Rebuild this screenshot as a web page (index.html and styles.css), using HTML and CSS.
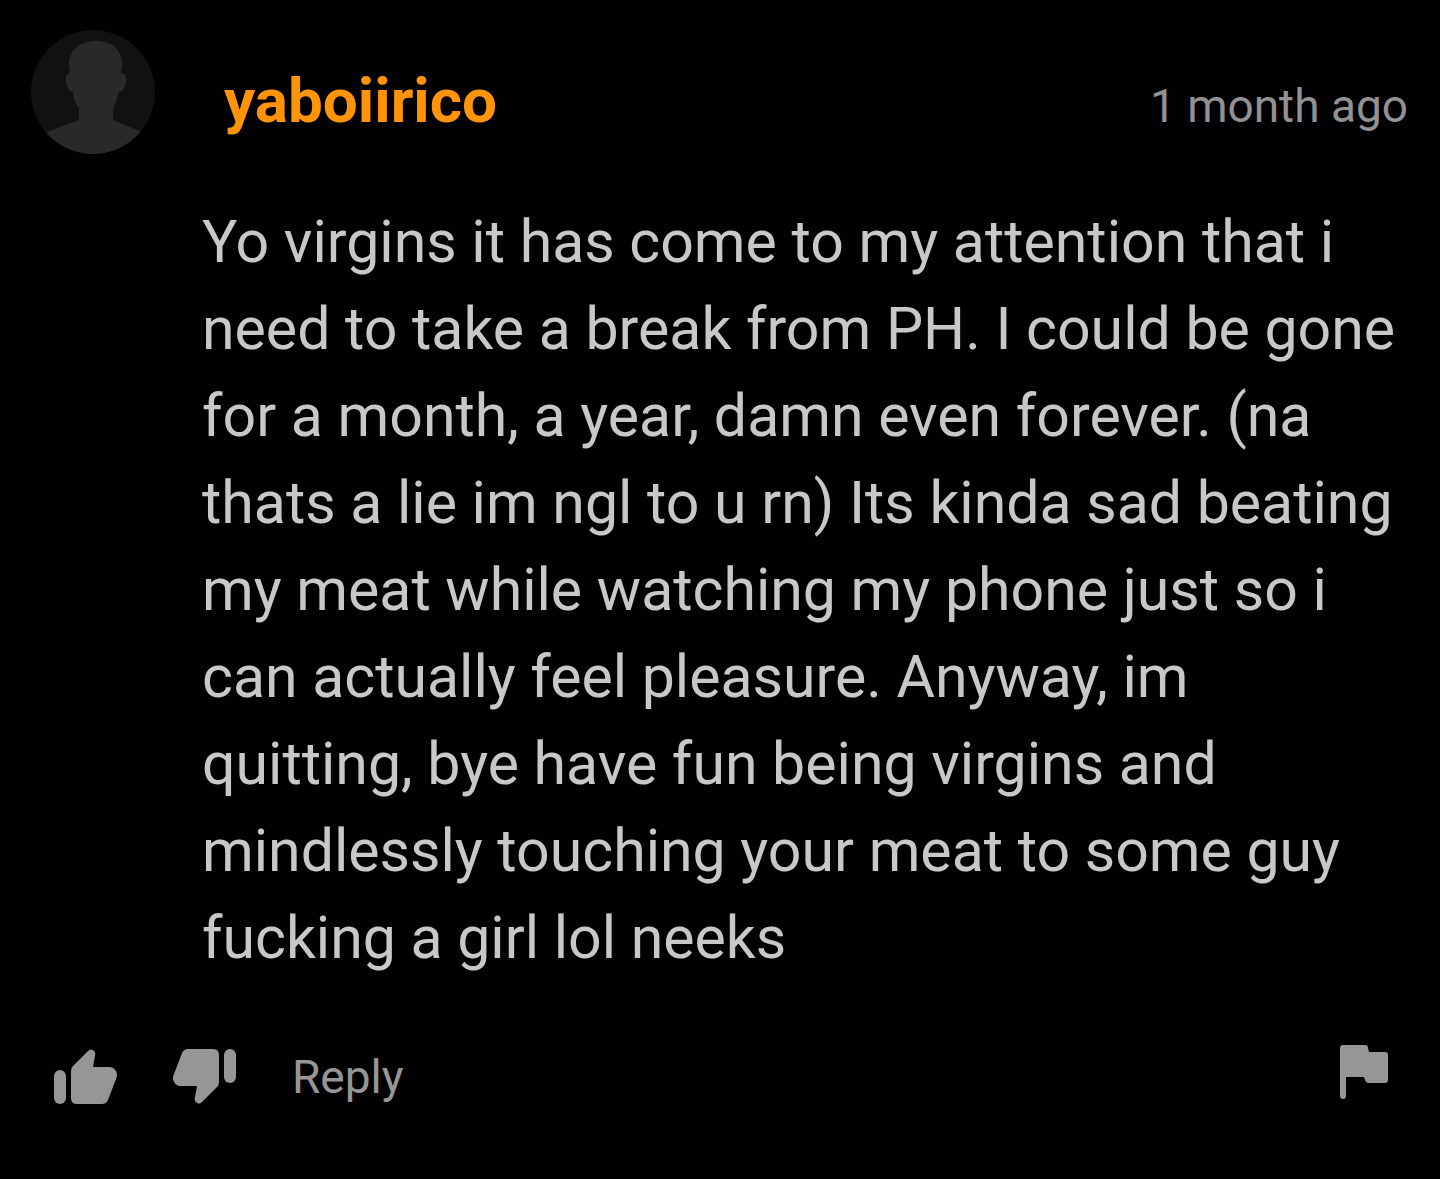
FILE: index.html
```html
<!DOCTYPE html>
<html lang="en">
<head>
<meta charset="utf-8">
<meta name="viewport" content="width=device-width, initial-scale=1">
<title>Comment</title>
<link rel="stylesheet" href="styles.css">
</head>
<body>
<article class="comment">
  <header class="comment-header">
    <svg class="avatar" viewBox="0 0 124 124" aria-hidden="true">
      <defs><clipPath id="avatar-clip"><circle cx="62" cy="62" r="62"/></clipPath></defs>
      <g clip-path="url(#avatar-clip)">
        <rect class="avatar-bg" width="124" height="124"/>
        <path class="avatar-person" d="M65 11C49 11 38 20 38 34L39 43C34 43 34 51 36 56Q38 62 42 62Q43 72 48 78V90L16 102L8 124H118L109 101L82 90V78Q86 71 88 62Q92 62 94 56C96 51 96 43 90 43L91 34C91 20 81 11 65 11Z"/>
      </g>
    </svg>
    <a class="author" href="#">yaboiirico</a>
    <time class="age">1 month ago</time>
  </header>
  <p class="comment-text">Yo virgins it has come to my attention that i need to take a break from PH. I could be gone for a month, a year, damn even forever. (na thats a lie im ngl to u rn) Its kinda sad beating my meat while watching my phone just so i can actually feel pleasure. Anyway, im quitting, bye have fun being virgins and mindlessly touching your meat to some guy fucking a girl lol neeks</p>
  <footer class="actions">
    <button class="icon-button" type="button" aria-label="Like">
      <svg class="thumb" viewBox="0 0 64 56" aria-hidden="true"><rect y="21" width="12" height="34" rx="6"/><path d="M17 22Q17 19 19 17L34 2Q37-1 40 2Q42 4 41 7L39 18H55C61 18 65 24 62 30L54 51Q52 55 48 55H23Q17 55 17 49Z"/></svg>
    </button>
    <button class="icon-button" type="button" aria-label="Dislike">
      <svg class="thumb" viewBox="0 0 64 56" aria-hidden="true"><rect x="51" width="12" height="34" rx="6"/><path d="M46 33Q46 36 44 38L29 53Q26 56 23 53Q21 51 22 48L24 37H8C2 37-2 31 1 25L9 4Q11 0 15 0H40Q46 0 46 6Z"/></svg>
    </button>
    <button class="reply" type="button">Reply</button>
    <button class="icon-button flag-button" type="button" aria-label="Report">
      <svg class="flag" viewBox="0 0 50 56" aria-hidden="true"><path d="M1 3Q1 0 4 0H26Q29 0 29 3L30 7H46Q49 7 49 10V35Q49 38 46 38H29Q27 38 26 35L25 32H7V51Q7 54 4 54Q1 54 1 51Z"/></svg>
    </button>
  </footer>
</article>
</body>
</html>
```
FILE: styles.css
```css
* { box-sizing: border-box; }
body {
  margin: 0;
  background: #010002;
  color: #c8c7c9;
  font-family: Roboto, sans-serif;
}
.comment { padding: 30px 32px 64px 31px; }
.comment-header { display: flex; align-items: center; }
.avatar { width: 124px; height: 124px; flex: none; }
.avatar-bg { fill: #111; }
.avatar-person { fill: #292929; }
.author {
  margin-left: 69px;
  padding-top: 18px;
  color: #ff9408;
  font-size: 62px;
  font-weight: 700;
  line-height: 68px;
  text-decoration: none;
}
.age {
  margin-left: auto;
  padding-top: 28px;
  color: #929193;
  font-size: 46px;
  line-height: 56px;
}
.comment-text {
  margin: 44px 0 0 171px;
  font-size: 59px;
  line-height: 87px;
}
.actions { display: flex; align-items: center; margin-top: 64px; padding: 0 19px 0 23px; }
button { padding: 0; border: 0; background: none; color: #979697; font: inherit; }
.icon-button { display: flex; }
.icon-button + .icon-button { margin-left: 55px; }
.thumb { width: 64px; height: 56px; fill: currentColor; }
.flag { width: 50px; height: 56px; fill: currentColor; }
.reply { margin-left: 55px; font-size: 46px; line-height: 56px; }
.flag-button { margin-left: auto; padding-bottom: 8px; }
```
